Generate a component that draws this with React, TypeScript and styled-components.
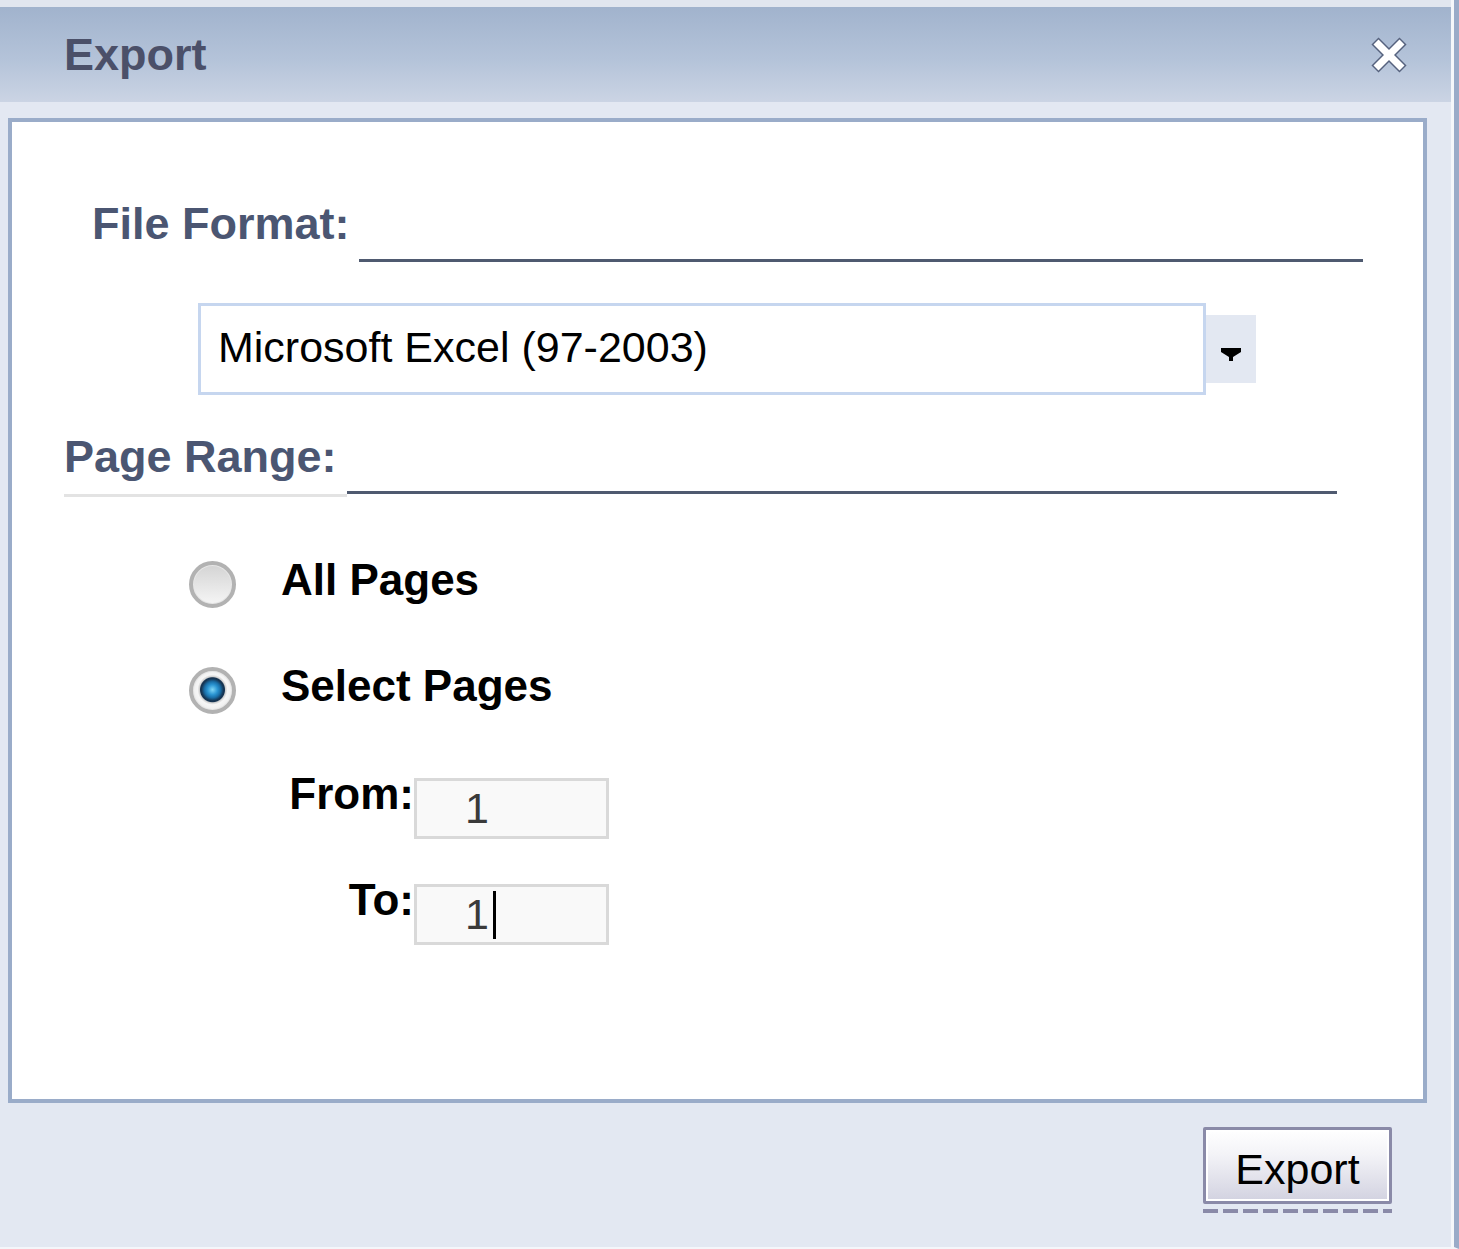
import * as React from 'react';
import styled, { createGlobalStyle } from 'styled-components';

const GlobalStyle = createGlobalStyle`
  html, body {
    margin: 0;
    padding: 0;
    background: #ffffff;
  }
  body {
    font-family: 'Liberation Sans', Arial, sans-serif;
  }
`;

const Window = styled.div`
  box-sizing: border-box;
  display: flex;
  width: 1459px;
  height: 1249px;
  padding-right: 3px;
  border-right: 5px solid #9aabc8;
  border-bottom: 2px solid #f4f6fa;
  background: #f5f7fa;
`;

const Dialog = styled.div`
  flex: 1;
  display: flex;
  flex-direction: column;
  background: #e3e8f2;
`;

const TitleBar = styled.div`
  box-sizing: border-box;
  height: 102px;
  display: flex;
  align-items: center;
  justify-content: space-between;
  padding: 0 44px 0 64px;
  border-top: 7px solid #e1e6ef;
  background: linear-gradient(#a1b3cd 0%, #b4c3d9 55%, #cbd4e4 100%);
`;

const Title = styled.span`
  font: bold 45px/1 'Liberation Sans', Arial, sans-serif;
  color: #4b5069;
`;

const CloseButton = styled.button`
  width: 36px;
  height: 36px;
  padding: 0;
  border: 0;
  background: none;
  display: flex;
  cursor: pointer;
`;

const Panel = styled.div`
  box-sizing: border-box;
  height: 985px;
  margin: 16px 24px 0 8px;
  border: 4px solid #9aacc9;
  background: #ffffff;
`;

const SectionRow = styled.div<{ $margin: string }>`
  display: flex;
  align-items: flex-end;
  margin: ${(p) => p.$margin};
`;

const SectionLabel = styled.span<{ $underlined?: boolean }>`
  font: bold 45px/1 'Liberation Sans', Arial, sans-serif;
  color: #4b5672;
  padding: ${(p) => (p.$underlined ? '0 10px 15px 0' : '0 9px 16px 0')};
  border-bottom: ${(p) => (p.$underlined ? '3px solid #e3e3e3' : 'none')};
`;

const Rule = styled.div<{ $lift?: number }>`
  flex: 1;
  height: 0;
  border-bottom: 3px solid #4f5a70;
  margin-bottom: ${(p) => p.$lift || 0}px;
`;

const SelectRow = styled.div`
  display: flex;
  align-items: center;
  margin: 41px 0 0 186px;
`;

const SelectBox = styled.div`
  box-sizing: border-box;
  width: 1008px;
  height: 92px;
  display: flex;
  align-items: center;
  padding: 0 0 4px 17px;
  border: 3px solid #c6d6ef;
  font: 43px/1 'Liberation Sans', Arial, sans-serif;
  color: #000000;
`;

const DropButton = styled.div`
  box-sizing: border-box;
  width: 50px;
  height: 68px;
  padding-top: 12px;
  display: flex;
  align-items: center;
  justify-content: center;
  background: #e3e8f2;
`;

const RadioGroup = styled.div`
  display: flex;
  flex-direction: column;
  gap: 59px;
  margin: 64px 0 0 177px;
`;

const RadioRow = styled.label`
  display: flex;
  align-items: center;
  gap: 45px;
  height: 47px;
`;

const Radio = styled.span<{ $checked?: boolean }>`
  box-sizing: border-box;
  width: 47px;
  height: 47px;
  border-radius: 50%;
  border: 4px solid #b2b2b2;
  box-shadow: inset 0 0 0 1px #e6e6e6;
  background: ${(p) =>
    p.$checked
      ? 'radial-gradient(circle at 50% 48%, #7fd6f6 0, #2b95d2 5px, #1a6fa8 8px, #163553 11px, #163553 12px, #cfcfcf 13px, #f6f6f6 15px, #e2e2e2 100%)'
      : 'linear-gradient(#d4d4d4, #f5f5f5)'};
`;

const RadioLabel = styled.span`
  font: bold 44px/47px 'Liberation Sans', Arial, sans-serif;
  color: #000000;
  padding-bottom: 10px;
`;

const RangeGrid = styled.div`
  display: grid;
  grid-template-columns: 126px 195px;
  row-gap: 45px;
  margin: 64px 0 0 276px;
`;

const RangeLabel = styled.span`
  font: bold 44px/1 'Liberation Sans', Arial, sans-serif;
  color: #000000;
  text-align: right;
  margin-top: -6px;
`;

const RangeInput = styled.div`
  box-sizing: border-box;
  height: 61px;
  display: flex;
  align-items: center;
  padding-left: 48px;
  border: 3px solid #d9d9d9;
  background: #f9f9f9;
  font: 43px/1 'Liberation Sans', Arial, sans-serif;
  color: #3a3a3a;
`;

const Caret = styled.span`
  width: 3px;
  height: 48px;
  margin-left: 4px;
  background: #000000;
`;

const Footer = styled.div`
  display: flex;
  justify-content: flex-end;
  padding: 24px 59px 0 0;
`;

const ButtonWrap = styled.div`
  display: flex;
  flex-direction: column;
  gap: 5px;
`;

const ExportButton = styled.button`
  box-sizing: border-box;
  width: 189px;
  height: 77px;
  padding: 8px 0 0;
  border: 3px solid #8a8aa8;
  border-radius: 2px;
  box-shadow: inset 0 0 0 2px #ffffff;
  background: linear-gradient(#ffffff 0%, #f3f3f7 35%, #d2d2e0 100%);
  font: 43px/1 'Liberation Sans', Arial, sans-serif;
  color: #000000;
  cursor: pointer;
`;

const DashLine = styled.div`
  height: 4px;
  background: repeating-linear-gradient(
    to right,
    #8a8aa8 0,
    #8a8aa8 15px,
    transparent 15px,
    transparent 20px
  );
`;

const CloseIcon = () => (
  <svg width="36" height="36" viewBox="0 0 36 36">
    <g strokeLinecap="butt">
      <line x1="4" y1="4" x2="32" y2="32" stroke="#56627e" strokeWidth="10" />
      <line x1="32" y1="4" x2="4" y2="32" stroke="#56627e" strokeWidth="10" />
      <line x1="5" y1="5" x2="31" y2="31" stroke="#ffffff" strokeWidth="7" />
      <line x1="31" y1="5" x2="5" y2="31" stroke="#ffffff" strokeWidth="7" />
    </g>
  </svg>
);

const ArrowIcon = () => (
  <svg width="20" height="14" viewBox="0 0 20 14">
    <polygon points="0,0 20,0 20,4 12,9 12,13 8,13 8,9 0,4" fill="#000000" />
  </svg>
);

export default function App() {
  return (
    <>
      <GlobalStyle />
      <Window>
        <Dialog>
          <TitleBar>
            <Title>Export</Title>
            <CloseButton aria-label="Close">
              <CloseIcon />
            </CloseButton>
          </TitleBar>

          <Panel>
            <SectionRow $margin="79px 60px 0 80px">
              <SectionLabel>File Format:</SectionLabel>
              <Rule />
            </SectionRow>

            <SelectRow>
              <SelectBox>Microsoft Excel (97-2003)</SelectBox>
              <DropButton>
                <ArrowIcon />
              </DropButton>
            </SelectRow>

            <SectionRow $margin="39px 86px 0 52px">
              <SectionLabel $underlined>Page Range:</SectionLabel>
              <Rule $lift={3} />
            </SectionRow>

            <RadioGroup>
              <RadioRow>
                <Radio />
                <RadioLabel>All Pages</RadioLabel>
              </RadioRow>
              <RadioRow>
                <Radio $checked />
                <RadioLabel>Select Pages</RadioLabel>
              </RadioRow>
            </RadioGroup>

            <RangeGrid>
              <RangeLabel>From:</RangeLabel>
              <RangeInput>1</RangeInput>
              <RangeLabel>To:</RangeLabel>
              <RangeInput>
                1<Caret />
              </RangeInput>
            </RangeGrid>
          </Panel>

          <Footer>
            <ButtonWrap>
              <ExportButton>Export</ExportButton>
              <DashLine />
            </ButtonWrap>
          </Footer>
        </Dialog>
      </Window>
    </>
  );
}
